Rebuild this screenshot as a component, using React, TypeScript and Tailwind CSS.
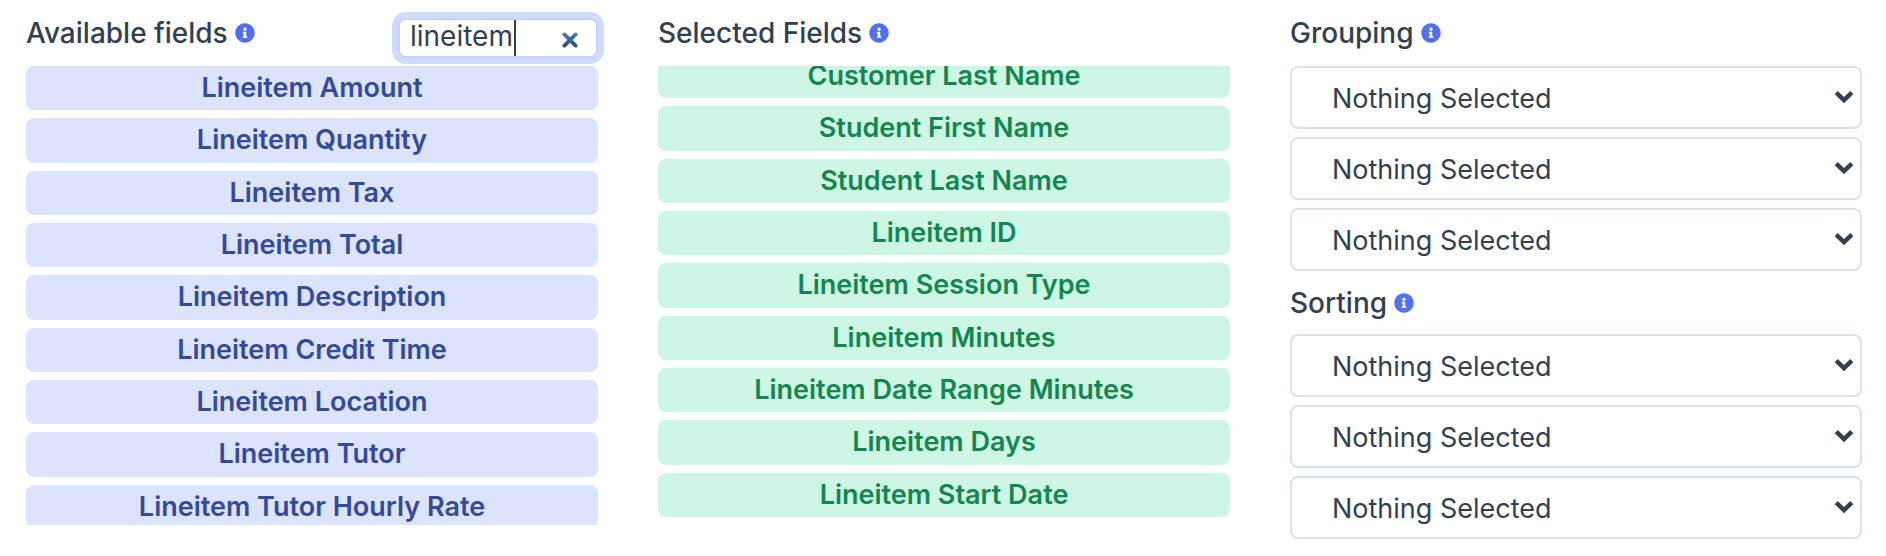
import { useState } from "react"
import { FaInfoCircle } from "react-icons/fa"

const availableFields = [
  "Lineitem Amount",
  "Lineitem Quantity",
  "Lineitem Tax",
  "Lineitem Total",
  "Lineitem Description",
  "Lineitem Credit Time",
  "Lineitem Location",
  "Lineitem Tutor",
  "Lineitem Tutor Hourly Rate",
]

const selectedFields = [
  "Customer Last Name",
  "Student First Name",
  "Student Last Name",
  "Lineitem ID",
  "Lineitem Session Type",
  "Lineitem Minutes",
  "Lineitem Date Range Minutes",
  "Lineitem Days",
  "Lineitem Start Date",
]

const ColumnHeading = ({ children }: { children: string }) => (
  <h2 className="flex items-center gap-[7px] text-[28px] leading-8 font-medium">
    {children}
    <FaInfoCircle className="size-5 text-[#5170f5]" />
  </h2>
)

const FieldSelect = ({ label }: { label: string }) => (
  <div className="relative">
    <select
      aria-label={label}
      className="block h-[63px] w-full appearance-none rounded-lg border-2 border-[#d8e2ef] bg-white px-10 pt-[2px] text-[27px] leading-8"
    >
      <option>Nothing Selected</option>
    </select>
    <svg
      viewBox="0 0 20 14"
      className="pointer-events-none absolute top-6 right-2 h-[14px] w-5"
      fill="none"
      stroke="currentColor"
      strokeWidth="4.4"
    >
      <path d="M2.2 2.6 10 10.2 17.8 2.6" />
    </svg>
  </div>
)

const FieldSelectGroup = ({ title }: { title: string }) => (
  <div className="grid gap-2">
    {[1, 2, 3].map((n) => (
      <FieldSelect key={n} label={`${title} ${n}`} />
    ))}
  </div>
)

export default function App() {
  const [search, setSearch] = useState("lineitem")

  return (
    <main className="grid grid-cols-3 gap-x-[60px] bg-white pr-6 pl-[26px] font-['Inter',sans-serif] text-[#344050]">
      {/* Available */}
      <section>
        <div className="flex h-[66px] items-start justify-between">
          <div className="pt-[17px]">
            <ColumnHeading>Available fields</ColumnHeading>
          </div>
          <div className="relative mt-[18px]">
            <input
              type="text"
              aria-label="Search fields"
              value={search}
              onChange={(e) => setSearch(e.target.value)}
              className="block h-10 w-[200px] rounded-lg border-2 border-[#c9d2fb] bg-white pr-12 pb-1 pl-[10px] text-[28px] leading-8 caret-transparent ring-6 ring-[#d3dbfc] outline-none"
            />
            <span className="absolute top-[2px] left-[116px] h-9 w-[2px] bg-[#344050]" />
            <button
              type="button"
              aria-label="Clear search"
              onClick={() => setSearch("")}
              className="absolute top-[14px] right-5 size-4"
            >
              <svg viewBox="0 0 16 16" fill="none" stroke="url(#clear)" strokeWidth="3.8" strokeLinecap="round">
                <defs>
                  <linearGradient id="clear" gradientUnits="userSpaceOnUse" x1="0" y1="0" x2="0" y2="16">
                    <stop offset="0" stopColor="#4a80c8" />
                    <stop offset="1" stopColor="#2a4580" />
                  </linearGradient>
                </defs>
                <path d="M2.4 2.4 13.6 13.6M13.6 2.4 2.4 13.6" />
              </svg>
            </button>
          </div>
        </div>
        <div className="h-[459px] overflow-hidden">
          <ul className="grid h-[463px] auto-rows-fr gap-2">
            {availableFields.map((field) => (
              <li
                key={field}
                className="flex items-center justify-center rounded-lg bg-[#dbe3fd] text-[27px] leading-8 font-semibold text-[#344a9c]"
              >
                {field}
              </li>
            ))}
          </ul>
        </div>
      </section>

      {/* Selected */}
      <section>
        <div className="h-[66px] pt-[17px]">
          <ColumnHeading>Selected Fields</ColumnHeading>
        </div>
        <div className="h-[459px] overflow-hidden">
          <ul className="-mt-3 grid h-[463px] auto-rows-fr gap-2">
            {selectedFields.map((field) => (
              <li
                key={field}
                className="flex items-center justify-center rounded-lg bg-[#cdf6e4] text-[27px] leading-8 font-semibold text-[#128850]"
              >
                {field}
              </li>
            ))}
          </ul>
        </div>
      </section>

      {/* Grouping and sorting */}
      <section>
        <div className="h-[66px] pt-[17px]">
          <ColumnHeading>Grouping</ColumnHeading>
        </div>
        <FieldSelectGroup title="Grouping" />
        <div className="flex h-[63px] items-center">
          <ColumnHeading>Sorting</ColumnHeading>
        </div>
        <FieldSelectGroup title="Sorting" />
      </section>
    </main>
  )
}
